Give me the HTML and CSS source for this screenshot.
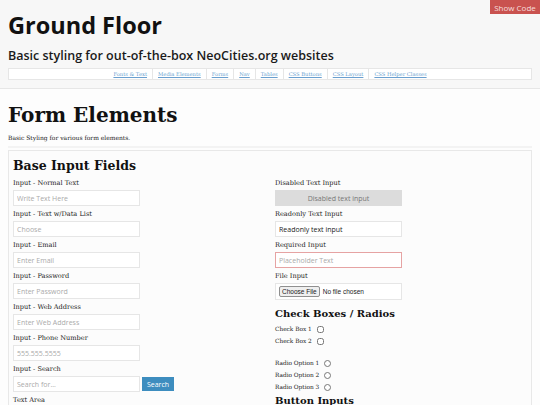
FILE: index.html
```html
<!DOCTYPE html>
<html lang="en">
<head>
    <meta charset="UTF-8">
    <meta name="viewport" content="width=device-width, initial-scale=1.0">
    <title>Ground Floor - Form Elements</title>
    <link rel="stylesheet" href="styles.css">
</head>
<body>

<header class="site-header">
    <h1 class="site-title">Ground Floor</h1>
    <p class="tagline">Basic styling for out-of-the-box NeoCities.org websites</p>
    <nav class="main-nav">
        <a href="#">Fonts &amp; Text</a>
        <a href="#">Media Elements</a>
        <a href="#">Forms</a>
        <a href="#">Nav</a>
        <a href="#">Tables</a>
        <a href="#">CSS Buttons</a>
        <a href="#">CSS Layout</a>
        <a href="#">CSS Helper Classes</a>
    </nav>
</header>

<a href="#" class="show-code">Show Code</a>

<main class="content">
    <h1 class="page-title">Form Elements</h1>
    <p class="intro">Basic Styling for various form elements.</p>
    <hr class="divider">

    <section class="panel">
        <h2 class="panel-title">Base Input Fields</h2>
        <div class="columns">
            <!-- columna izquierda -->
            <div class="col">
                <label class="field-label">Input - Normal Text</label>
                <input class="field" type="text" placeholder="Write Text Here">

                <label class="field-label">Input - Text w/Data List</label>
                <input class="field" type="text" placeholder="Choose">

                <label class="field-label">Input - Email</label>
                <input class="field" type="email" placeholder="Enter Email">

                <label class="field-label">Input - Password</label>
                <input class="field" type="password" placeholder="Enter Password">

                <label class="field-label">Input - Web Address</label>
                <input class="field" type="url" placeholder="Enter Web Address">

                <label class="field-label">Input - Phone Number</label>
                <input class="field" type="tel" placeholder="555.555.5555">

                <label class="field-label">Input - Search</label>
                <div class="search-row">
                    <input class="field" type="search" placeholder="Search for...">
                    <button class="search-btn">Search</button>
                </div>

                <label class="field-label">Text Area</label>
            </div>

            <!-- columna derecha -->
            <div class="col">
                <label class="field-label">Disabled Text Input</label>
                <input class="field disabled" type="text" value="Disabled text input" disabled>

                <label class="field-label">Readonly Text Input</label>
                <input class="field" type="text" value="Readonly text input" readonly>

                <label class="field-label">Required Input</label>
                <input class="field required" type="text" placeholder="Placeholder Text">

                <label class="field-label">File Input</label>
                <div class="field file-field">
                    <span class="file-btn">Choose File</span>
                    <span>No file chosen</span>
                </div>

                <h3 class="sub-title">Check Boxes / Radios</h3>
                <label class="check">Check Box 1 <input type="checkbox"></label>
                <label class="check">Check Box 2 <input type="checkbox"></label>

                <div class="radio-group">
                    <label class="check">Radio Option 1 <input type="radio" name="opt"></label>
                    <label class="check">Radio Option 2 <input type="radio" name="opt"></label>
                    <label class="check">Radio Option 3 <input type="radio" name="opt"></label>
                </div>

                <h3 class="sub-title tight">Button Inputs</h3>
            </div>
        </div>
    </section>
</main>

</body>
</html>
```

FILE: styles.css
```css
body {
    margin: 0;
    background-color: #fdfdfd;
    font-family: "DejaVu Serif", Georgia, serif;
    color: #1a1a1a;
}
.site-header {
    background-color: #f7f7f7;
    border-bottom: 1px solid #e6e6e6;
    padding: 10px 8px 8px;
}
.site-title {
    font-family: "Open Sans", sans-serif;
    font-weight: 700;
    font-size: 23.5px;
    line-height: 30px;
    margin: 0;
    color: #111;
}
.tagline {
    font-family: "Open Sans", sans-serif;
    font-weight: 600;
    font-size: 12.5px;
    line-height: 18px;
    margin: 7px 0 3px;
    color: #1a1a1a;
}
.main-nav {
    display: flex;
    justify-content: center;
    align-items: center;
    height: 12px;
    box-sizing: border-box;
    background-color: #fff;
    border: 1px solid #e6e6e6;
}
.main-nav a {
    font-size: 5.2px;
    line-height: 10px;
    color: #6a9fcf;
    padding: 0 5px;
    border-left: 1px solid #e6e6e6;
}
.main-nav a:first-child {
    border-left: none;
}
.show-code {
    position: absolute;
    top: 0;
    right: 0;
    width: 50px;
    height: 14px;
    display: flex;
    align-items: center;
    justify-content: center;
    background-color: #c9524f;
    color: #f6dede;
    font-family: "Open Sans", sans-serif;
    font-size: 8px;
    text-decoration: none;
}
.content {
    padding: 0 8px;
}
.page-title {
    font-size: 20px;
    line-height: 24px;
    margin: 14px 0 0;
    color: #111;
}
.intro {
    font-size: 6px;
    line-height: 8px;
    margin: 7px 0 0;
}
.divider {
    border: none;
    border-top: 2px solid #f3f3f3;
    margin: 4px 0 2px;
}
.panel {
    background-color: #fcfcfc;
    border: 1px solid #e8e8e8;
    padding: 4px;
}
.panel-title {
    font-size: 12.5px;
    line-height: 16px;
    margin: 3px 0 4px;
    color: #111;
}
.columns {
    display: grid;
    grid-template-columns: 1fr 1fr;
    column-gap: 10px;
}
.field-label {
    display: block;
    font-size: 6.6px;
    line-height: 10px;
    margin-bottom: 2px;
    color: #222;
}
.field {
    display: block;
    width: 127px;
    height: 16px;
    box-sizing: border-box;
    margin: 0 0 3px;
    padding: 0 3px;
    border: 1px solid #e6e6e6;
    background-color: #fff;
    font-family: "Open Sans", sans-serif;
    font-size: 7px;
    color: #222;
    outline: none;
}
.field::placeholder {
    color: #aaa;
}
.field.disabled {
    background-color: #dcdcdc;
    border-color: #dcdcdc;
    color: #777;
    text-align: center;
}
.field.required {
    border-color: #e6a3a3;
}
.file-field {
    display: flex;
    align-items: center;
    gap: 3px;
    height: 17px;
    font-family: "Liberation Sans", Arial, sans-serif;
    font-size: 6.5px;
}
.file-btn {
    background-color: #efefef;
    border: 1px solid #8f8f8f;
    border-radius: 2px;
    padding: 1px 2px;
    line-height: 7px;
}
.search-row {
    display: flex;
    align-items: center;
    gap: 2px;
    margin-bottom: 3px;
}
.search-row .field {
    margin: 0;
}
.search-btn {
    width: 32px;
    height: 14px;
    padding: 0;
    border: none;
    background-color: #3d8dbf;
    color: #fff;
    font-family: "Open Sans", sans-serif;
    font-size: 7px;
}
.sub-title {
    font-size: 10px;
    line-height: 14px;
    margin: 7px 0 2px;
    color: #111;
}
.sub-title.tight {
    margin-top: 1px;
}
.check {
    display: block;
    font-size: 5.8px;
    line-height: 12px;
}
.check input {
    width: 7px;
    height: 7px;
    margin: 0 0 0 3px;
    vertical-align: middle;
}
.radio-group {
    margin-top: 10px;
}
```
